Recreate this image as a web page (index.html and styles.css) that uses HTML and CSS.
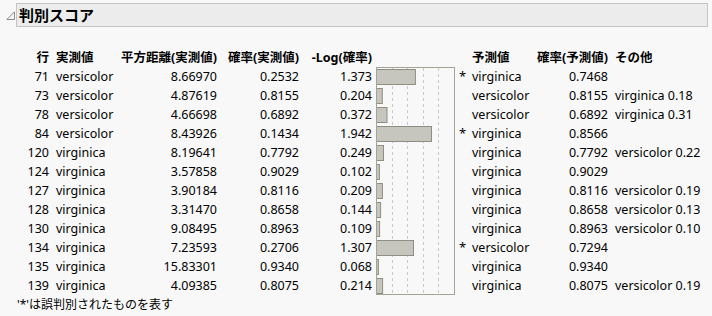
FILE: index.html
```html
<!DOCTYPE html>
<html lang="ja">
<head>
<meta charset="utf-8">
<title>判別スコア</title>
<link rel="stylesheet" href="styles.css">
</head>
<body>
<div class="panel">
  <div class="titlebar">
    <svg class="disclose" width="10" height="9" viewBox="0 0 10 9"><polygon points="8.5,0.8 8.5,8.5 0.8,8.5" fill="#f4f4f4" stroke="#8c8c8c" stroke-width="1"/></svg>
    <div class="titlebox">判別スコア</div>
  </div>
  <div class="report">
    <div class="table">
      <div class="col c-row r">
        <div class="h">行</div>
        <div>71</div><div>73</div><div>78</div><div>84</div><div>120</div><div>124</div><div>127</div><div>128</div><div>130</div><div>134</div><div>135</div><div>139</div>
      </div>
      <div class="col c-act">
        <div class="h">実測値</div>
        <div>versicolor</div><div>versicolor</div><div>versicolor</div><div>versicolor</div><div>virginica</div><div>virginica</div><div>virginica</div><div>virginica</div><div>virginica</div><div>virginica</div><div>virginica</div><div>virginica</div>
      </div>
      <div class="col c-dist r">
        <div class="h">平方距離(実測値)</div>
        <div>8.66970</div><div>4.87619</div><div>4.66698</div><div>8.43926</div><div>8.19641</div><div>3.57858</div><div>3.90184</div><div>3.31470</div><div>9.08495</div><div>7.23593</div><div>15.83301</div><div>4.09385</div>
      </div>
      <div class="col c-prob r">
        <div class="h">確率(実測値)</div>
        <div>0.2532</div><div>0.8155</div><div>0.6892</div><div>0.1434</div><div>0.7792</div><div>0.9029</div><div>0.8116</div><div>0.8658</div><div>0.8963</div><div>0.2706</div><div>0.9340</div><div>0.8075</div>
      </div>
      <div class="col c-log r">
        <div class="h">-Log(確率)</div>
        <div>1.373</div><div>0.204</div><div>0.372</div><div>1.942</div><div>0.249</div><div>0.102</div><div>0.209</div><div>0.144</div><div>0.109</div><div>1.307</div><div>0.068</div><div>0.214</div>
      </div>
      <div class="col c-chart">
        <div class="h"></div>
        <svg class="chart" width="79" height="228" viewBox="0 0 79 228">
          <g stroke="#c9c9c9" stroke-width="1" stroke-dasharray="3 3">
            <line x1="16.5" y1="1" x2="16.5" y2="227"/>
            <line x1="31.5" y1="1" x2="31.5" y2="227"/>
            <line x1="47.5" y1="1" x2="47.5" y2="227"/>
            <line x1="62.5" y1="1" x2="62.5" y2="227"/>
          </g>
          <g fill="#c6c6be" stroke="#8e8e82" stroke-width="1">
            <rect x="0.5" y="2.5" width="38.9" height="15"/>
            <rect x="0.5" y="21.5" width="5.8" height="15"/>
            <rect x="0.5" y="40.5" width="10.5" height="15"/>
            <rect x="0.5" y="59.5" width="55" height="15"/>
            <rect x="0.5" y="78.5" width="7" height="15"/>
            <rect x="0.5" y="97.5" width="2.9" height="15"/>
            <rect x="0.5" y="116.5" width="5.9" height="15"/>
            <rect x="0.5" y="135.5" width="4.1" height="15"/>
            <rect x="0.5" y="154.5" width="3.1" height="15"/>
            <rect x="0.5" y="173.5" width="37" height="15"/>
            <rect x="0.5" y="192.5" width="1.9" height="15"/>
            <rect x="0.5" y="211.5" width="6.1" height="15"/>
          </g>
          <rect x="0.5" y="0.5" width="78" height="227" fill="none" stroke="#a3a396" stroke-width="1"/>
        </svg>
      </div>
      <div class="col c-star">
        <div class="h"></div>
        <div>*</div><div></div><div></div><div>*</div><div></div><div></div><div></div><div></div><div></div><div>*</div><div></div><div></div>
      </div>
      <div class="col c-pred">
        <div class="h">予測値</div>
        <div>virginica</div><div>versicolor</div><div>versicolor</div><div>virginica</div><div>virginica</div><div>virginica</div><div>virginica</div><div>virginica</div><div>virginica</div><div>versicolor</div><div>virginica</div><div>virginica</div>
      </div>
      <div class="col c-pprob r">
        <div class="h">確率(予測値)</div>
        <div>0.7468</div><div>0.8155</div><div>0.6892</div><div>0.8566</div><div>0.7792</div><div>0.9029</div><div>0.8116</div><div>0.8658</div><div>0.8963</div><div>0.7294</div><div>0.9340</div><div>0.8075</div>
      </div>
      <div class="col c-other">
        <div class="h">その他</div>
        <div></div><div>virginica 0.18</div><div>virginica 0.31</div><div></div><div>versicolor 0.22</div><div></div><div>versicolor 0.19</div><div>versicolor 0.13</div><div>versicolor 0.10</div><div></div><div></div><div>versicolor 0.19</div>
      </div>
    </div>
    <div class="note">'*'は誤判別されたものを表す</div>
  </div>
</div>
</body>
</html>
```
FILE: styles.css
```css
html, body {
  margin: 0;
  padding: 0;
  background: #f8f8f8;
}
body {
  font-family: "Noto Sans", "Noto Sans CJK JP", sans-serif;
  font-size: 12.5px;
  color: #000;
  width: 712px;
  height: 316px;
  overflow: hidden;
}
.panel {
  padding-top: 3px;
}
.titlebar {
  display: flex;
  align-items: center;
  margin-right: 4px;
}
.disclose {
  margin-left: 6px;
  flex: none;
}
.titlebox {
  flex: 1;
  height: 22px;
  line-height: 22px;
  background: #ececec;
  border: 1px solid #c4c4c4;
  font-size: 15px;
  font-weight: bold;
  padding-left: 2px;
}
.report {
  padding-top: 21px;
}
.table {
  display: flex;
  align-items: flex-start;
}
.col > div {
  height: 19px;
  line-height: 19px;
  white-space: nowrap;
}
.col > .h {
  font-weight: bold;
}
.r {
  text-align: right;
}
.c-row { width: 49px; }
.c-act { width: 64px; padding-left: 7px; }
.c-dist { width: 97px; }
.c-prob { width: 82px; }
.c-log { width: 73px; }
.c-chart { width: 79px; margin-left: 4px; }
.chart { display: block; }
.c-star { width: 17px; }
.c-star > div {
  padding-left: 4px;
  font-size: 13px;
}
.c-pred { width: 58px; }
.c-pprob { width: 78px; }
.c-other { padding-left: 7px; }
.note {
  height: 19px;
  line-height: 19px;
  padding-left: 17px;
  font-size: 12px;
}
```
